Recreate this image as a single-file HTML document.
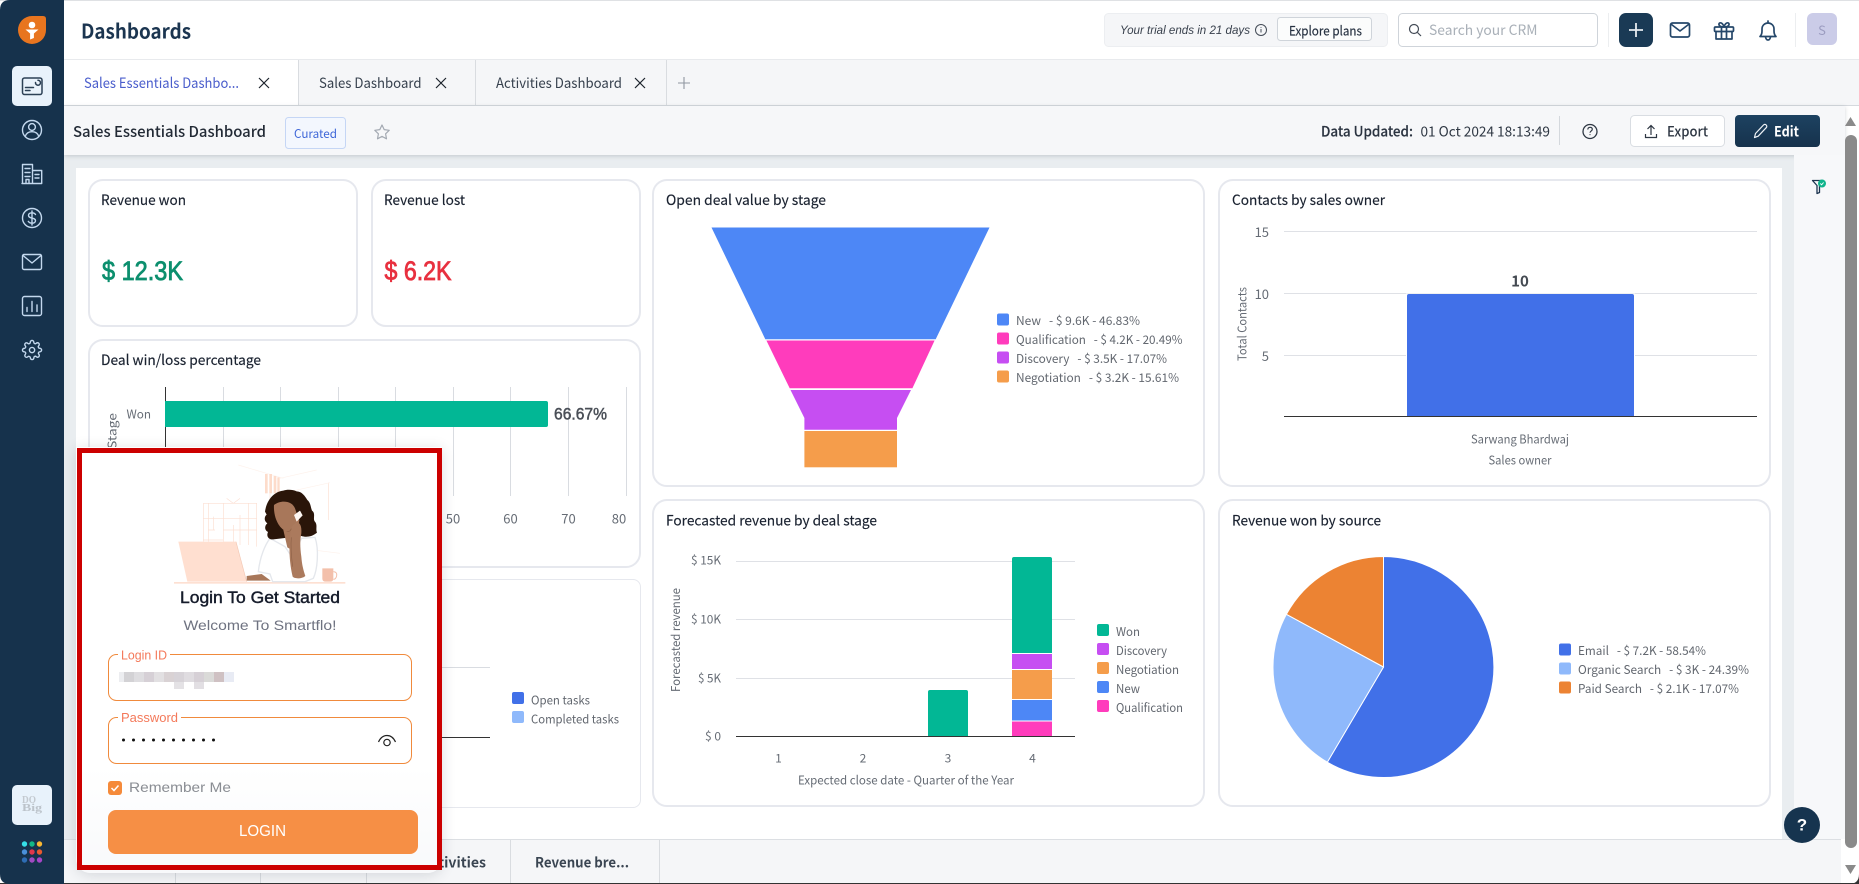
<!DOCTYPE html>
<html lang="en"><head><meta charset="utf-8"><title>Dashboards</title>
<style>
html,body{margin:0;padding:0;width:1859px;height:884px;overflow:hidden;background:#fff;font-family:"Liberation Sans",sans-serif}
.a{position:absolute}
svg text{font-family:"Noto Sans CJK SC","Liberation Sans",sans-serif;dominant-baseline:central;white-space:pre}
svg.l text,svg text.lib{font-family:"Liberation Sans",sans-serif}
.ct{font-size:14px;fill:#1a2230;stroke:#1a2230;stroke-width:.15}
.lg{font-size:12px;fill:#62676f}
.ax{font-size:12px;fill:#666c75}
.card{position:absolute;box-sizing:border-box;background:#fff;border:2px solid #e6e8ee;border-radius:15px}
</style></head><body>
<div class="a" style="left:0;top:0;width:1859px;height:1px;background:#dfe1e4"></div>
<div class="a" style="left:64px;top:59px;width:1795px;height:1px;background:#e8eaed"></div>
<!-- tabs -->
<div class="a" style="left:299px;top:60px;width:1560px;height:45px;background:#f5f6f8"></div>
<div class="a" style="left:64px;top:105px;width:1795px;height:1px;background:#d5d9de"></div>
<div class="a" style="left:298px;top:60px;width:1px;height:45px;background:#d9dce0"></div>
<div class="a" style="left:475px;top:60px;width:1px;height:45px;background:#d9dce0"></div>
<div class="a" style="left:666px;top:60px;width:1px;height:45px;background:#d9dce0"></div>
<!-- content bg -->
<div class="a" style="left:64px;top:155px;width:1781px;height:685px;background:#e9edf0"></div>
<div class="a" style="left:64px;top:106px;width:1781px;height:49px;background:#f6f7f9;box-shadow:0 1px 4px rgba(60,70,80,.22)"></div>
<div class="a" style="left:76px;top:168px;width:1706px;height:671px;background:#fff"></div>
<div class="a" style="left:1794px;top:155px;width:51px;height:684px;background:#f7f8fa"></div>
<!-- cards -->
<div class="card" style="left:88px;top:179px;width:270px;height:148px"></div>
<div class="card" style="left:371px;top:179px;width:270px;height:148px"></div>
<div class="card" style="left:88px;top:339px;width:553px;height:229px"></div>
<div class="card" style="left:88px;top:579px;width:553px;height:229px;border-width:1px;border-radius:8px"></div>
<div class="card" style="left:652px;top:179px;width:553px;height:308px"></div>
<div class="card" style="left:1218px;top:179px;width:553px;height:308px"></div>
<div class="card" style="left:652px;top:499px;width:553px;height:308px"></div>
<div class="card" style="left:1218px;top:499px;width:553px;height:308px"></div>
<!-- bottom bar -->
<div class="a" style="left:64px;top:839px;width:1777px;height:44px;background:#f5f6f8;border-top:1px solid #dcdfe3;box-sizing:border-box"></div>
<div class="a" style="left:0;top:883px;width:1859px;height:1px;background:#333"></div>
<div class="a" style="left:1841px;top:839px;width:4px;height:44px;background:#fff"></div>

<svg class="a" style="left:0;top:0" width="1859" height="884" viewBox="0 0 1859 884" xmlns="http://www.w3.org/2000/svg">
<!-- sidebar -->
<path d="M0 10 Q0 0 10 0 H64 V884 H10 Q0 884 0 874Z" fill="#16324c"/>
<path d="M18 30a14 14 0 0 1 14-14h11q3 0 3 3v11a14 14 0 0 1-28 0Z" fill="#e8751f"/>
<circle cx="32" cy="25" r="3.3" fill="#fff"/><path d="M25.5 29.5h13l-4.6 4v4.5l-3.8 1.5v-6Z" fill="#fff"/>
<rect x="12" y="66" width="40" height="40" rx="5" fill="#e8f2fb"/>
<g fill="none" stroke="#2b4055" stroke-width="1.5" stroke-linecap="round">
<rect x="22.5" y="78" width="19.5" height="16.5" rx="2"/><path d="M25.5 87.5h8M25.5 90.5h4.5M35.5 82.5a2.5 2.5 0 1 0 2.5-2.3"/>
</g>
<g fill="none" stroke="#c3d8ee" stroke-width="1.4" stroke-linecap="round" stroke-linejoin="round">
<circle cx="32" cy="130" r="9.5"/><circle cx="32" cy="127" r="3.4"/><path d="M25.3 136.5c.8-3.2 3.4-4.8 6.7-4.8s5.900 1.600 6.700 4.800"/>
<path d="M22.500 183.500V164.500H32.500V183.500M32.500 170.500H41.700V183.500H22M25 168.500h5M25 172.500h5M25 176.500h5M26 183.500v-4h3v4M35 174.500h4M35 178h4"/>
<circle cx="32" cy="218" r="9.500"/><path d="M35.500 214.500c-.8-1.200-2-1.700-3.500-1.700-2 0-3.500 1-3.500 2.600 0 3.500 7 1.800 7 5.200 0 1.600-1.500 2.600-3.500 2.600-1.600 0-2.900-.6-3.700-1.800M32 211v14"/>
<rect x="22.500" y="254.500" width="19" height="15" rx="1.500"/><path d="M23 255.500l9 7.500 9-7.500"/>
<rect x="22.500" y="296.500" width="19" height="19" rx="2"/><path d="M27 311.500v-4M32 311.500v-10M37 311.500v-6.500"/>
<g transform="translate(21.600 339.600) scale(.87)" stroke-width="1.600"><circle cx="12" cy="12" r="3"/><path d="M19.400 15a1.650 1.650 0 0 0 .33 1.820l.06.06a2 2 0 0 1 0 2.830 2 2 0 0 1-2.830 0l-.06-.06a1.650 1.650 0 0 0-1.820-.33 1.650 1.650 0 0 0-1 1.510V21a2 2 0 0 1-2 2 2 2 0 0 1-2-2v-.09A1.650 1.650 0 0 0 9 19.400a1.650 1.650 0 0 0-1.820.33l-.06.06a2 2 0 0 1-2.830 0 2 2 0 0 1 0-2.830l.06-.06a1.650 1.650 0 0 0 .33-1.820 1.650 1.650 0 0 0-1.510-1H3a2 2 0 0 1-2-2 2 2 0 0 1 2-2h.09A1.650 1.650 0 0 0 4.600 9a1.650 1.650 0 0 0-.33-1.820l-.06-.06a2 2 0 0 1 0-2.830 2 2 0 0 1 2.830 0l.06.06a1.650 1.650 0 0 0 1.820.33H9a1.650 1.650 0 0 0 1-1.510V3a2 2 0 0 1 2-2 2 2 0 0 1 2 2v.09a1.650 1.650 0 0 0 1 1.510 1.650 1.650 0 0 0 1.820-.33l.06-.06a2 2 0 0 1 2.830 0 2 2 0 0 1 0 2.830l-.06.06a1.650 1.650 0 0 0-.33 1.820V9a1.650 1.650 0 0 0 1.510 1H21a2 2 0 0 1 2 2 2 2 0 0 1-2 2h-.09a1.650 1.650 0 0 0-1.510 1z"/></g>
</g>
<rect x="12" y="785" width="40" height="40" rx="5" fill="#e8f2fb"/>
<text class="lib" x="22" y="800.500" textLength="14" lengthAdjust="spacingAndGlyphs" style="font:bold 10px 'Liberation Serif',serif" fill="#c3c9cf">DO</text>
<text class="lib" x="22" y="808" textLength="20" lengthAdjust="spacingAndGlyphs" style="font:bold 11px 'Liberation Serif',serif" fill="#bcc3ca">Big</text>
<g><circle cx="24.500" cy="844" r="2.700" fill="#36e0e8"/><circle cx="32" cy="844" r="2.700" fill="#12b886"/><circle cx="39.500" cy="844" r="2.700" fill="#f7b733"/><circle cx="24.500" cy="852" r="2.700" fill="#4a90d9"/><circle cx="32" cy="852" r="2.700" fill="#e0364c"/><circle cx="39.500" cy="852" r="2.700" fill="#e8582f"/><circle cx="24.500" cy="860" r="2.700" fill="#2e6db4"/><circle cx="32" cy="860" r="2.700" fill="#a04bc2"/><circle cx="39.500" cy="860" r="2.700" fill="#a845c8"/></g>

<!-- header -->
<text x="81" y="30" textLength="110" lengthAdjust="spacingAndGlyphs" style="font-size:20px;font-weight:700" fill="#1b3550">Dashboards</text>
<rect x="1104.500" y="13.500" width="283" height="33" rx="4" fill="#f5f6f8" stroke="#eceef1"/>
<text class="lib" x="1120" y="30" textLength="130" lengthAdjust="spacingAndGlyphs" style="font-size:12px;font-style:italic" fill="#39414d">Your trial ends in 21 days</text>
<circle cx="1261" cy="30" r="5.500" fill="none" stroke="#444c57"/><path d="M1261 29v3.500M1261 27v.8" stroke="#444c57" fill="none"/>
<rect x="1277.500" y="17.500" width="94" height="23" rx="3" fill="#fbfcfc" stroke="#cfd4da"/>
<text x="1289" y="30" textLength="73" lengthAdjust="spacingAndGlyphs" style="font-size:13px" fill="#253040" stroke="#253040" stroke-width=".15">Explore plans</text>
<rect x="1398.500" y="13.500" width="199" height="33" rx="4" fill="#fff" stroke="#cfd4da"/>
<circle cx="1414" cy="29" r="4.500" fill="none" stroke="#444c57" stroke-width="1.200"/><path d="M1417.500 32.500l3.500 3.500" stroke="#444c57" stroke-width="1.200"/>
<text x="1429" y="30" textLength="108.500" lengthAdjust="spacingAndGlyphs" style="font-size:14px" fill="#a9b0b8">Search your CRM</text>
<path d="M1608.500 13v34M1795.500 13v34" stroke="#eceef0"/>
<rect x="1619" y="13" width="34" height="34" rx="7" fill="#1a3a55"/>
<path d="M1636 23v14M1629 30h14" stroke="#e6ebf0" stroke-width="1.800"/>
<g fill="none" stroke="#25476a" stroke-width="1.700" stroke-linejoin="round" stroke-linecap="round">
<rect x="1670.500" y="23" width="19" height="14" rx="2"/><path d="M1671.500 24.500l8.500 6.500 8.500-6.500"/>
<rect x="1714.500" y="27" width="19" height="4.500" rx="1"/><path d="M1716 31.500v7.500h16v-7.500M1721.500 27v12M1726.500 27v12M1724 27c-3.500 0-5.500-1.500-5-3.200.6-1.800 3.700-1.300 5 3.200 1.300-4.500 4.400-5 5-3.200.5 1.700-1.500 3.200-5 3.200"/>
<path d="M1760 36.500c1.500-1.500 2-3 2-5.500v-2c0-3.500 2.700-6 6-6s6 2.500 6 6v2c0 2.500.5 4 2 5.500ZM1765.500 37c.4 2 1.300 3 2.500 3s2.100-1 2.500-3M1768 23v-2"/>
</g>
<rect x="1807" y="13" width="30" height="32" rx="6" fill="#cbcce8"/>
<text x="1822" y="29.500" text-anchor="middle" style="font-size:13px" fill="#9b9cc0">S</text>

<!-- tabs text -->
<text x="84" y="83" textLength="155" lengthAdjust="spacingAndGlyphs" style="font-size:14px" fill="#4a5dcc">Sales Essentials Dashbo...</text>
<text x="319" y="83" textLength="102.500" lengthAdjust="spacingAndGlyphs" style="font-size:14px" fill="#37414e">Sales Dashboard</text>
<text x="496" y="83" textLength="126" lengthAdjust="spacingAndGlyphs" style="font-size:14px" fill="#37414e">Activities Dashboard</text>
<path d="M259 78l10 10M269 78l-10 10M436 78l10 10M446 78l-10 10M635 78l10 10M645 78l-10 10" stroke="#1c232c" stroke-width="1.200" fill="none"/>
<path d="M684 77v12M678 83h12" stroke="#8f96a0" stroke-width="1.100"/>

<!-- sub header -->
<text x="73" y="131.500" textLength="193" lengthAdjust="spacingAndGlyphs" style="font-size:15px;font-weight:500" fill="#222a35">Sales Essentials Dashboard</text>
<rect x="285.500" y="117.500" width="60" height="31" rx="3" fill="#f3f7fe" stroke="#c5d6f5"/>
<text x="294" y="133.500" textLength="43" lengthAdjust="spacingAndGlyphs" style="font-size:12px" fill="#3f67d8">Curated</text>
<path d="M382 125l2.200 4.600 5 .7-3.600 3.500.9 5-4.500-2.400-4.500 2.400.9-5-3.600-3.500 5-.7Z" fill="none" stroke="#a3a9b2" stroke-width="1.200" stroke-linejoin="round"/>
<text x="1321" y="131.500" textLength="92" lengthAdjust="spacingAndGlyphs" style="font-size:14px;font-weight:500" fill="#2a3340" stroke="#2a3340" stroke-width=".15">Data Updated:</text>
<text x="1420.500" y="131.500" textLength="129.500" lengthAdjust="spacingAndGlyphs" style="font-size:14px" fill="#2e3743">01 Oct 2024 18:13:49</text>
<path d="M1559.500 116v29" stroke="#d4d8dd"/>
<circle cx="1590" cy="131.500" r="7" fill="none" stroke="#2e3743" stroke-width="1.300"/>
<path d="M1587.800 129.500c.1-1.400 1-2.200 2.300-2.200s2.200.8 2.200 1.900c0 1.900-2.300 1.800-2.300 3.600M1590 134.300v.8" fill="none" stroke="#2e3743" stroke-width="1.200"/>
<rect x="1630.500" y="115.500" width="94" height="31" rx="4" fill="#fff" stroke="#d9dde2"/>
<path d="M1651 135v-9M1647.500 129l3.500-3.500 3.500 3.500M1645.500 134v3.500h11V134" fill="none" stroke="#2e3743" stroke-width="1.200"/>
<text x="1667" y="131.500" textLength="41" lengthAdjust="spacingAndGlyphs" style="font-size:14px;font-weight:500" fill="#2e3743">Export</text>
<defs><linearGradient id="eg" x1="0" y1="0" x2="0" y2="1"><stop offset="0" stop-color="#1d4261"/><stop offset="1" stop-color="#16324c"/></linearGradient></defs>
<rect x="1735" y="115" width="85" height="32" rx="4" fill="url(#eg)"/>
<path d="M1754.500 137.500l1-4 8-8.500c.8-.8 2-.8 2.700 0 .8.800.8 1.900 0 2.700l-8 8.500Z" fill="none" stroke="#eef2f6" stroke-width="1.200" stroke-linejoin="round"/>
<text x="1774" y="131.500" textLength="25" lengthAdjust="spacingAndGlyphs" style="font-size:14px;font-weight:700" fill="#fff">Edit</text>

<!-- kpi -->
<text class="ct" x="101" y="200" textLength="85" lengthAdjust="spacingAndGlyphs">Revenue won</text>
<text class="ct" x="384" y="200" textLength="81" lengthAdjust="spacingAndGlyphs">Revenue lost</text>
<text class="lib" x="102" y="271" textLength="81" lengthAdjust="spacingAndGlyphs" style="font-size:27px" fill="#0c8f6e" stroke="#0c8f6e" stroke-width=".8">$ 12.3K</text>
<text class="lib" x="384.500" y="271" textLength="67" lengthAdjust="spacingAndGlyphs" style="font-size:27px" fill="#e8303f" stroke="#e8303f" stroke-width=".8">$ 6.2K</text>

<!-- deal -->
<text class="ct" x="101" y="360" textLength="160" lengthAdjust="spacingAndGlyphs">Deal win/loss percentage</text>
<path d="M223.500 387V496M280.500 387V496M338.500 387V496M395.500 387V496M453.500 387V496M510.500 387V496M568.500 387V496M626.500 387V496" stroke="#d9dce1"/>
<path d="M165.500 387V500" stroke="#333"/>
<path d="M165 401H546q2 0 2 2v22q0 2-2 2H165Z" fill="#02b795"/>
<text class="lib" x="554" y="414" textLength="53" lengthAdjust="spacingAndGlyphs" style="font-size:17px" fill="#4a4f57" stroke="#4a4f57" stroke-width=".5">66.67%</text>
<text x="126.500" y="414" textLength="24.500" lengthAdjust="spacingAndGlyphs" class="ax">Won</text>
<text transform="translate(112 449) rotate(-90)" textLength="36" lengthAdjust="spacingAndGlyphs" class="ax">Stage</text>
<text class="ax" x="453" y="518" text-anchor="middle" style="font-size:13px">50</text>
<text class="ax" x="510.500" y="518" text-anchor="middle" style="font-size:13px">60</text>
<text class="ax" x="568.500" y="518" text-anchor="middle" style="font-size:13px">70</text>
<text class="ax" x="619" y="518" text-anchor="middle" style="font-size:13px">80</text>

<!-- tasks -->
<path d="M442 667.500H490" stroke="#d9dce1"/><path d="M442 737.500H490" stroke="#333"/>
<rect x="512" y="692" width="12" height="12" rx="2" fill="#4170e8"/><rect x="512" y="711" width="12" height="12" rx="2" fill="#8fb9fb"/>
<text class="lg" x="531" y="700" textLength="59" lengthAdjust="spacingAndGlyphs">Open tasks</text>
<text class="lg" x="531" y="719" textLength="88" lengthAdjust="spacingAndGlyphs">Completed tasks</text>

<!-- funnel -->
<text class="ct" x="666" y="200" textLength="160" lengthAdjust="spacingAndGlyphs">Open deal value by stage</text>
<path d="M711.500 227.500H989.500L935.700 339.200H765.300Z" fill="#4d87f6"/>
<path d="M766.400 340.500H934.600L912.400 388.300H789.700Z" fill="#ff3cbc"/>
<path d="M790.500 390H911L897 418V429.700H804.400V418Z" fill="#c64ef2"/>
<rect x="804.400" y="431" width="92.600" height="36.300" fill="#f59d4b"/>
<rect x="997" y="313.500" width="12" height="12" rx="2" fill="#4d87f6"/><rect x="997" y="332.500" width="12" height="12" rx="2" fill="#ff3cbc"/><rect x="997" y="351.500" width="12" height="12" rx="2" fill="#c64ef2"/><rect x="997" y="370.500" width="12" height="12" rx="2" fill="#f59d4b"/>
<text class="lg" x="1016" y="320.500" textLength="124" lengthAdjust="spacingAndGlyphs">New   - $ 9.6K - 46.83%</text>
<text class="lg" x="1016" y="339.500" textLength="166.500" lengthAdjust="spacingAndGlyphs">Qualification   - $ 4.2K - 20.49%</text>
<text class="lg" x="1016" y="358.500" textLength="151" lengthAdjust="spacingAndGlyphs">Discovery   - $ 3.5K - 17.07%</text>
<text class="lg" x="1016" y="377.500" textLength="163" lengthAdjust="spacingAndGlyphs">Negotiation   - $ 3.2K - 15.61%</text>

<!-- contacts -->
<text class="ct" x="1232" y="200" textLength="153" lengthAdjust="spacingAndGlyphs">Contacts by sales owner</text>
<path d="M1284 231.500H1757M1284 293.500H1757M1284 355.500H1757" stroke="#dfe1e6"/>
<rect x="1406" y="293.500" width="229" height="122.500" fill="#fff"/>
<path d="M1407 296q0-2 2-2H1632q2 0 2 2V416H1407Z" fill="#4170e8"/>
<path d="M1284 416.500H1757" stroke="#333" stroke-width="1"/>
<text x="1520" y="281" text-anchor="middle" style="font-size:15px;font-weight:700" fill="#444a52">10</text>
<text class="ax" x="1269" y="231.500" text-anchor="end" style="font-size:13px">15</text>
<text class="ax" x="1269" y="293.500" text-anchor="end" style="font-size:13px">10</text>
<text class="ax" x="1269" y="355.500" text-anchor="end" style="font-size:13px">5</text>
<text class="ax" transform="translate(1242 361) rotate(-90)" textLength="74" lengthAdjust="spacingAndGlyphs">Total Contacts</text>
<text class="ax" x="1471" y="439" textLength="98" lengthAdjust="spacingAndGlyphs">Sarwang Bhardwaj</text>
<text class="ax" x="1488.500" y="460" textLength="63" lengthAdjust="spacingAndGlyphs">Sales owner</text>
<g transform="translate(1812 179)"><path d="M.5 1.500H11L7.500 6.500V13.500L5 14.500V6.500Z" fill="none" stroke="#1d3550" stroke-width="1.300" stroke-linejoin="round"/><circle cx="10" cy="4.500" r="4" fill="#10b48c"/><path d="M8.300 4.500l1.300 1.300 2-2.300" fill="none" stroke="#fff" stroke-width=".9"/></g>

<!-- forecast -->
<text class="ct" x="666" y="520.500" textLength="211" lengthAdjust="spacingAndGlyphs">Forecasted revenue by deal stage</text>
<path d="M736 561.500H1075M736 619.500H1075M736 678.500H1075" stroke="#dfe1e6"/>
<path d="M736 736.500H1075" stroke="#333"/>
<path d="M928 692q0-2 2-2H966q2 0 2 2V736H928Z" fill="#02b795"/>
<path d="M1012 559q0-2 2-2H1050q2 0 2 2V653H1012Z" fill="#02b795"/>
<rect x="1012" y="654" width="40" height="15" fill="#c64ef2"/><rect x="1012" y="670" width="40" height="29" fill="#f59d4b"/><rect x="1012" y="700" width="40" height="20.500" fill="#4d87f6"/><rect x="1012" y="721.500" width="40" height="14.500" fill="#ff3cbc"/>
<text class="ax" x="721" y="560" text-anchor="end" textLength="30" lengthAdjust="spacingAndGlyphs">$ 15K</text>
<text class="ax" x="721" y="619" text-anchor="end" textLength="30" lengthAdjust="spacingAndGlyphs">$ 10K</text>
<text class="ax" x="721" y="678" text-anchor="end" textLength="23" lengthAdjust="spacingAndGlyphs">$ 5K</text>
<text class="ax" x="721" y="736" text-anchor="end">$ 0</text>
<text class="ax" transform="translate(675.500 692) rotate(-90)" textLength="104" lengthAdjust="spacingAndGlyphs">Forecasted revenue</text>
<text class="ax" x="778.500" y="758" text-anchor="middle">1</text><text class="ax" x="863" y="758" text-anchor="middle">2</text><text class="ax" x="948" y="758" text-anchor="middle">3</text><text class="ax" x="1032.500" y="758" text-anchor="middle">4</text>
<text class="ax" x="798" y="780" textLength="216" lengthAdjust="spacingAndGlyphs">Expected close date - Quarter of the Year</text>
<rect x="1097" y="624" width="12" height="12" rx="2" fill="#02b795"/><rect x="1097" y="643" width="12" height="12" rx="2" fill="#c64ef2"/><rect x="1097" y="662" width="12" height="12" rx="2" fill="#f59d4b"/><rect x="1097" y="681" width="12" height="12" rx="2" fill="#4d87f6"/><rect x="1097" y="700" width="12" height="12" rx="2" fill="#ff3cbc"/>
<text class="lg" x="1116" y="631.500" textLength="24" lengthAdjust="spacingAndGlyphs">Won</text>
<text class="lg" x="1116" y="650.500" textLength="51" lengthAdjust="spacingAndGlyphs">Discovery</text>
<text class="lg" x="1116" y="669.500" textLength="63" lengthAdjust="spacingAndGlyphs">Negotiation</text>
<text class="lg" x="1116" y="688.500" textLength="24" lengthAdjust="spacingAndGlyphs">New</text>
<text class="lg" x="1116" y="707.500" textLength="67" lengthAdjust="spacingAndGlyphs">Qualification</text>

<!-- pie -->
<text class="ct" x="1232" y="520.500" textLength="149" lengthAdjust="spacingAndGlyphs">Revenue won by source</text>
<path d="M1383.500 667V556.500A110.500 110.500 0 1 1 1327.300 762.200Z" fill="#4170e8" stroke="#fff"/>
<path d="M1383.500 667L1327.300 762.200A110.500 110.500 0 0 1 1286.400 614.300Z" fill="#8fb9fb" stroke="#fff"/>
<path d="M1383.500 667L1286.400 614.300A110.500 110.500 0 0 1 1383.500 556.500Z" fill="#ec8333" stroke="#fff"/>
<rect x="1559" y="643.500" width="12" height="12" rx="2" fill="#4170e8"/><rect x="1559" y="662.500" width="12" height="12" rx="2" fill="#8fb9fb"/><rect x="1559" y="681.500" width="12" height="12" rx="2" fill="#ec8333"/>
<text class="lg" x="1578" y="650.500" textLength="128" lengthAdjust="spacingAndGlyphs">Email   - $ 7.2K - 58.54%</text>
<text class="lg" x="1578" y="669.500" textLength="171" lengthAdjust="spacingAndGlyphs">Organic Search   - $ 3K - 24.39%</text>
<text class="lg" x="1578" y="688.500" textLength="161" lengthAdjust="spacingAndGlyphs">Paid Search   - $ 2.1K - 17.07%</text>

<!-- bottom tabs -->
<path d="M175.500 840V883M260.500 840V883M366.500 840V883M510.500 840V883M659.500 840V883" stroke="#d9dce0"/>
<text x="422" y="862.500" textLength="64" lengthAdjust="spacingAndGlyphs" style="font-size:14px;font-weight:700" fill="#3a4552">Activities</text>
<text x="535" y="862.500" textLength="94" lengthAdjust="spacingAndGlyphs" style="font-size:14px;font-weight:700" fill="#3a4552">Revenue bre...</text>

<!-- scrollbar -->
<path d="M1850.500 117l5.500 9h-11Z" fill="#8a8a8a"/>
<rect x="1845" y="135" width="12" height="713" rx="6" fill="#8a8a8a"/>
<path d="M1850.500 874l-5.500-9h11Z" fill="#8a8a8a"/>
<path d="M1849 884Q1859 884 1859 874V884Z" fill="#333"/>
<circle cx="1802" cy="825" r="18" fill="#16344f"/>
<text class="lib" x="1802" y="825" text-anchor="middle" style="font-size:17px;font-weight:700" fill="#fff">?</text>
</svg>

<!-- login overlay -->
<div class="a" style="left:76px;top:447px;width:366px;height:426px;background:linear-gradient(#fff 0,#fff 75%,#f8f9fb 100%);border-radius:0 0 14px 14px;box-shadow:0 2px 14px rgba(40,50,60,.16)"></div>
<svg class="a l" style="left:0;top:0" width="1859" height="884" viewBox="0 0 1859 884" xmlns="http://www.w3.org/2000/svg">
<g transform="translate(70 450) scale(.33333)">
 <g fill="none" stroke="#fcdfd2" stroke-width="2">
  <path d="M400 160H560V290M400 160V275M415 160V275M460 160V275M400 205H560M460 240H560M490 225V290M510 195V285M535 160V285M400 270H460M600 130V265M470 145l20 15 20-15M430 200v40M415 240h20M775 98V210"/>
 </g>
 <g fill="none" stroke="#fef2ec" stroke-width="2"><path d="M505 45L640 85M630 85L740 60M635 130L780 98M730 300L810 310"/></g>
 <g fill="#fddccb"><rect x="585" y="72" width="8" height="58"/><rect x="598" y="72" width="8" height="58"/><rect x="611" y="78" width="8" height="52"/><rect x="622" y="82" width="7" height="48"/></g>
 <rect x="312" y="396" width="514" height="5" fill="#fde0d2"/>
 <path d="M325 275H498L530 395H352Z" fill="#ffdfd0"/><path d="M498 275L530 395" stroke="#f3c8b4" stroke-width="2"/>
 <path d="M600 265L645 290 665 320 695 265 735 262C748 300 742 360 730 385L705 395H608L600 372 565 365C570 320 585 285 600 265Z" fill="#fff" stroke="#e4e7ec" stroke-width="4"/>
 <path d="M530 378L575 372 602 392H530Z" fill="#a8775a"/>
 <path d="M585 185C590 150 612 125 640 122 650 118 668 118 680 124 695 124 705 138 712 150 722 158 722 172 726 182 738 190 728 206 734 214 744 224 736 236 741 248 725 262 705 262 695 258L610 268C596 270 588 258 594 246 582 240 584 226 592 220 580 212 584 198 590 194Z" fill="#2a1509"/>
 <path d="M612 165C630 150 665 150 675 175L688 212C685 240 665 250 650 245 625 235 610 200 612 165Z" fill="#a8775a"/>
 <path d="M640 240L668 240 668 302 652 292Z" fill="#a8775a"/>
 <path d="M663 236C676 208 697 212 694 250 690 270 690 290 694 320 696 345 700 360 706 378 695 388 672 386 668 380 660 345 654 300 663 236Z" fill="#ab7a5d"/>
 <path d="M650 245C658 246 662 242 664 236M664 262C662 285 664 320 668 350" fill="none" stroke="#8f6248" stroke-width="2"/>
 <path d="M672 195L690 182 698 196 680 215Z" fill="#fdf6f2"/>
 <path d="M757 355H790V385Q790 395 780 395H767Q757 395 757 385Z" fill="#f3c0ab"/>
 <path d="M790 365q12 1 10 12t-10 11" fill="none" stroke="#f3c0ab" stroke-width="3"/>
</g>
<text x="180" y="597.500" textLength="160" lengthAdjust="spacingAndGlyphs" style="font-size:17px" fill="#161c2b" stroke="#161c2b" stroke-width=".45">Login To Get Started</text>
<text x="183.500" y="625" textLength="153" lengthAdjust="spacingAndGlyphs" style="font-size:14px" fill="#6e7280">Welcome To Smartflo!</text>
<rect x="108.500" y="654.500" width="303" height="46" rx="8" fill="#fff" stroke="#f08a3c"/>
<rect x="118" y="650" width="52" height="10" fill="#fff"/>
<text x="121" y="655" textLength="46" lengthAdjust="spacingAndGlyphs" style="font-size:13px" fill="#f4795a">Login ID</text>
<g>
<rect x="119" y="672" width="5" height="10" fill="#ecedf0"/><rect x="124" y="672" width="10" height="10" fill="#d3d2d5"/><rect x="134" y="672" width="10" height="10" fill="#dedde0"/><rect x="144" y="672" width="10" height="10" fill="#d6d0d6"/><rect x="154" y="672" width="10" height="10" fill="#e2e0e2"/><rect x="164" y="672" width="10" height="10" fill="#d9d2d4"/><rect x="174" y="672" width="10" height="10" fill="#d7d3d8"/><rect x="184" y="672" width="10" height="10" fill="#dfdce0"/><rect x="194" y="672" width="10" height="10" fill="#d6d0d6"/><rect x="204" y="672" width="10" height="10" fill="#dadad8"/><rect x="214" y="672" width="10" height="10" fill="#cfc1c3"/><rect x="224" y="672" width="10" height="10" fill="#e8ebf4"/>
<rect x="174" y="682" width="10" height="7" fill="#e4e2e5"/><rect x="194" y="682" width="10" height="7" fill="#e2dfe3"/>
</g>
<rect x="108.500" y="717.500" width="303" height="46" rx="8" fill="#fff" stroke="#f08a3c"/>
<rect x="118" y="713" width="63" height="10" fill="#fff"/>
<text x="121" y="717.500" textLength="57" lengthAdjust="spacingAndGlyphs" style="font-size:13px" fill="#f4795a">Password</text>
<g fill="#111"><circle cx="123.500" cy="740" r="1.500"/><circle cx="133.500" cy="740" r="1.500"/><circle cx="143.500" cy="740" r="1.500"/><circle cx="153.500" cy="740" r="1.500"/><circle cx="163.500" cy="740" r="1.500"/><circle cx="173.500" cy="740" r="1.500"/><circle cx="183.500" cy="740" r="1.500"/><circle cx="193.500" cy="740" r="1.500"/><circle cx="203.500" cy="740" r="1.500"/><circle cx="213.500" cy="740" r="1.500"/></g>
<path d="M378.500 742c2-4.500 5-6.500 8.500-6.500s6.500 2 8.500 6.500" fill="none" stroke="#222" stroke-width="1.200"/><circle cx="387" cy="742.500" r="3.200" fill="none" stroke="#222" stroke-width="1.200"/>
<rect x="108" y="781" width="14" height="14" rx="3" fill="#f58a3a"/>
<path d="M111.500 788l2.500 2.500 4.500-5" fill="none" stroke="#fff" stroke-width="1.500"/>
<text x="129" y="787" textLength="102" lengthAdjust="spacingAndGlyphs" style="font-size:14px" fill="#8a8d93">Remember Me</text>
<rect x="108" y="810" width="310" height="44" rx="8" fill="#f68f45"/>
<text x="262.500" y="831.500" text-anchor="middle" textLength="47" lengthAdjust="spacingAndGlyphs" style="font-size:16px" fill="#fff">LOGIN</text>
<rect x="79.500" y="450.500" width="360" height="417" fill="none" stroke="#cc0000" stroke-width="5"/>
</svg>
</body></html>
